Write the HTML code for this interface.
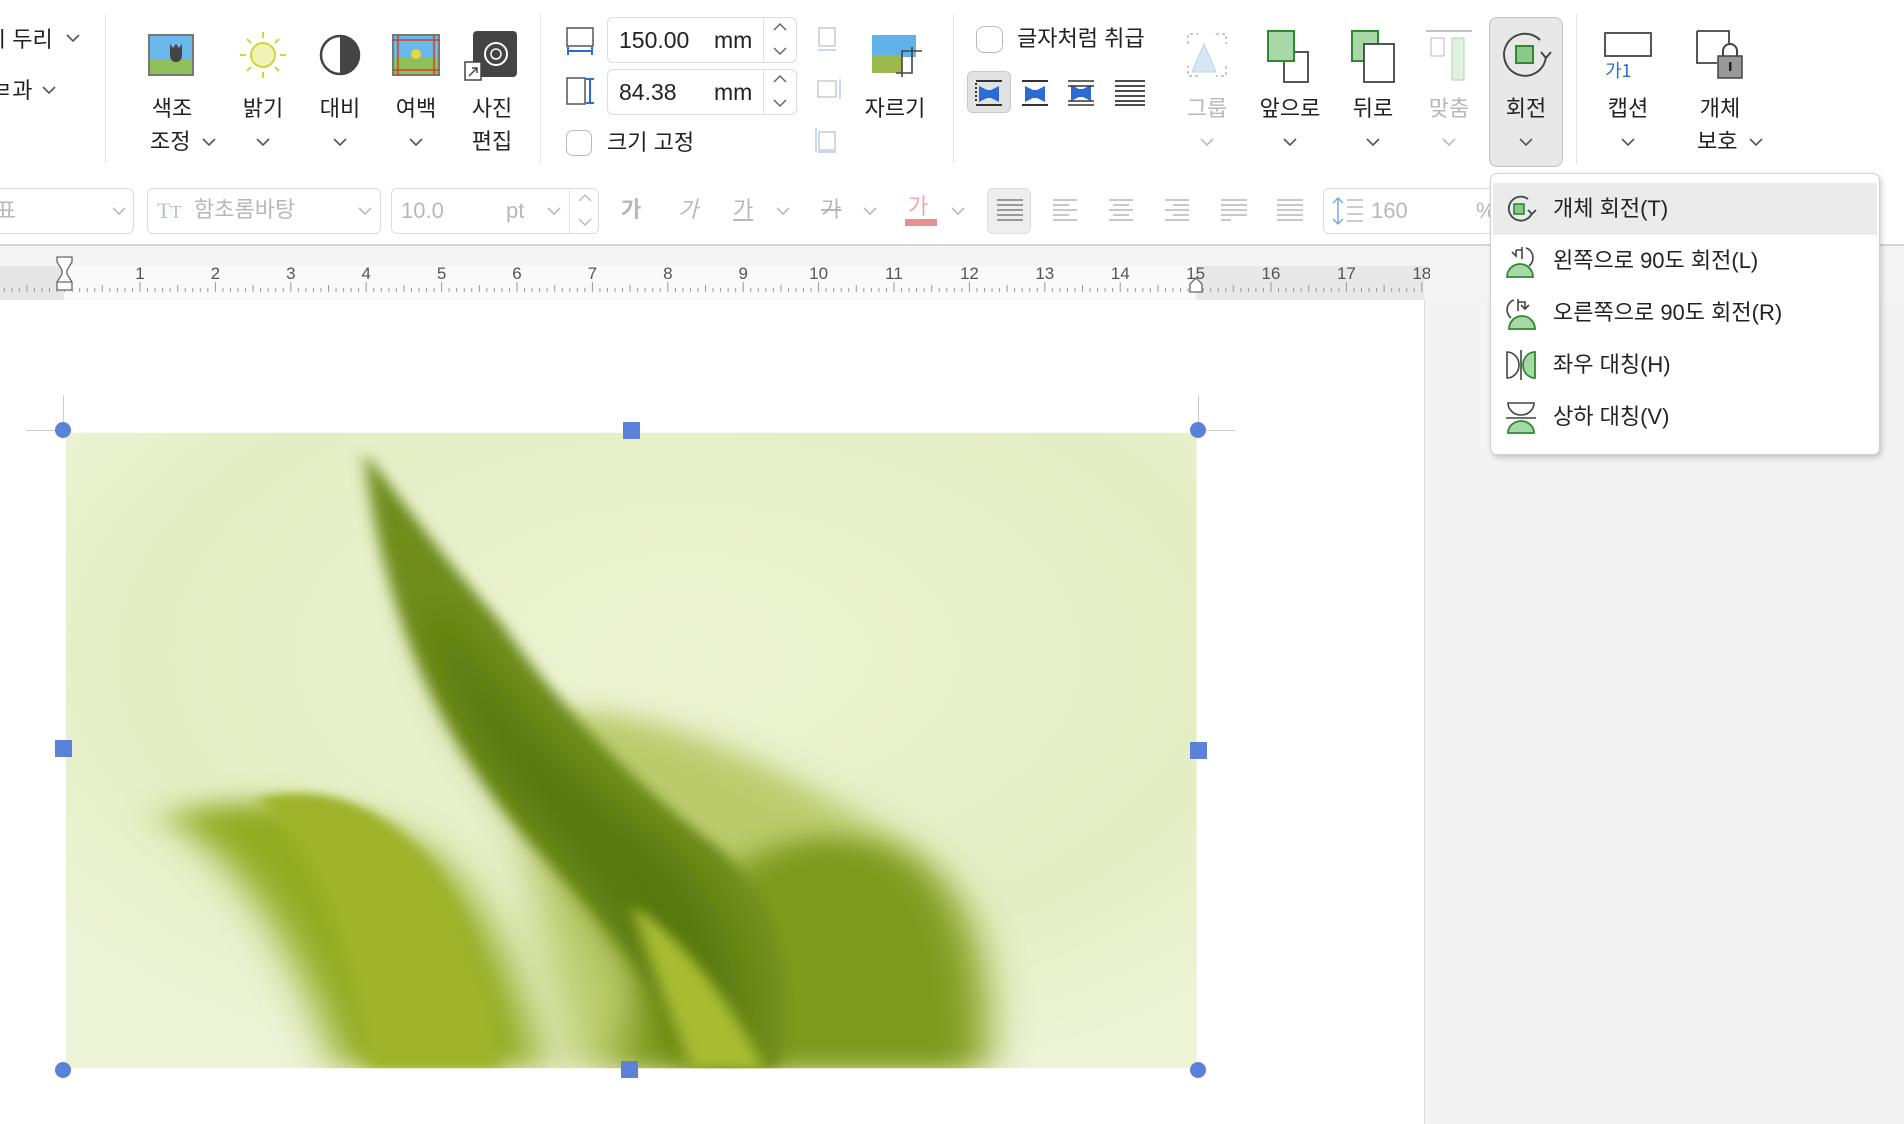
<!DOCTYPE html>
<html><head><meta charset="utf-8"><style>
*{margin:0;padding:0;box-sizing:border-box}
body{width:1904px;height:1124px;overflow:hidden;background:#fff;font-family:"Liberation Sans","Noto Sans CJK KR",sans-serif;color:#222;position:relative}
.a{position:absolute}
.c{position:absolute;transform:translateX(-50%);white-space:nowrap;font-size:22px;line-height:1}
.t{position:absolute;white-space:nowrap;font-size:22px;line-height:1}
.g{color:#b8b8b8}
.box{position:absolute;border:1px solid #dcdcdc;border-radius:6px;background:#fff}
.sep{position:absolute;width:1px;background:#e4e4e4;top:14px;height:150px}
</style></head><body>
<div class="t" style="left:-8px;top:29px">ㅣ두리</div>
<svg class="a" style="left:66px;top:34px" width="14" height="9"><polyline points="1,1 7,7 13,1" fill="none" stroke="#555" stroke-width="1.6"/></svg>
<div class="t" style="left:-8px;top:80px">ㄹ과</div>
<svg class="a" style="left:42px;top:86px" width="14" height="9"><polyline points="1,1 7,7 13,1" fill="none" stroke="#555" stroke-width="1.6"/></svg>
<div class="sep" style="left:105px"></div>

<svg class="a" style="left:148px;top:34px" width="46" height="42"><rect x="1" y="1" width="44" height="40" fill="#6bb8ea" stroke="#777"/><rect x="1" y="26" width="44" height="15" fill="#8fbf5a"/><path d="M28 10 l3 4 3-4 v10 q0 8-6 8 q-6 0-6-8 v-10 l3 4z" fill="#444"/><rect x="1" y="1" width="44" height="40" fill="none" stroke="#777" stroke-width="2"/></svg>
<div class="c" style="left:172px;top:98px">색조</div>
<div class="t" style="left:150px;top:131px">조정</div>
<svg class="a" style="left:202px;top:138px" width="14" height="9"><polyline points="1,1 7,7 13,1" fill="none" stroke="#555" stroke-width="1.6"/></svg>
<svg class="a" style="left:238px;top:30px" width="50" height="50"><circle cx="25" cy="25" r="12" fill="#eef3b8" stroke="#cdd63a" stroke-width="2"/><g stroke="#cdd63a" stroke-width="2"><line x1="25" y1="2" x2="25" y2="8"/><line x1="25" y1="42" x2="25" y2="48"/><line x1="2" y1="25" x2="8" y2="25"/><line x1="42" y1="25" x2="48" y2="25"/><line x1="9" y1="9" x2="13" y2="13"/><line x1="37" y1="37" x2="41" y2="41"/><line x1="41" y1="9" x2="37" y2="13"/><line x1="9" y1="41" x2="13" y2="37"/></g></svg>
<div class="c" style="left:263px;top:98px">밝기</div>
<svg class="a" style="left:256px;top:138px" width="14" height="9"><polyline points="1,1 7,7 13,1" fill="none" stroke="#555" stroke-width="1.6"/></svg>
<svg class="a" style="left:318px;top:33px" width="44" height="44"><circle cx="22" cy="22" r="19" fill="#fff" stroke="#444" stroke-width="2.5"/><path d="M22 3 a19 19 0 0 1 0 38z" fill="#444"/></svg>
<div class="c" style="left:340px;top:98px">대비</div>
<svg class="a" style="left:333px;top:138px" width="14" height="9"><polyline points="1,1 7,7 13,1" fill="none" stroke="#555" stroke-width="1.6"/></svg>
<svg class="a" style="left:392px;top:34px" width="48" height="42"><rect x="1" y="1" width="46" height="40" fill="#6bb8ea" stroke="#777" stroke-width="2"/><rect x="2" y="24" width="44" height="16" fill="#8fbf5a"/><circle cx="24" cy="20" r="5" fill="#e8d83a"/><g stroke="#d04020" stroke-width="1.5"><line x1="6" y1="1" x2="6" y2="41"/><line x1="42" y1="1" x2="42" y2="41"/><line x1="1" y1="6" x2="47" y2="6"/><line x1="1" y1="36" x2="47" y2="36"/></g></svg>
<div class="c" style="left:416px;top:98px">여백</div>
<svg class="a" style="left:409px;top:138px" width="14" height="9"><polyline points="1,1 7,7 13,1" fill="none" stroke="#555" stroke-width="1.6"/></svg>
<svg class="a" style="left:463px;top:30px" width="56" height="52"><rect x="10" y="1" width="44" height="46" rx="4" fill="#444"/><circle cx="33" cy="24" r="11" fill="none" stroke="#fff" stroke-width="2"/><circle cx="33" cy="24" r="5" fill="none" stroke="#fff" stroke-width="1.5"/><rect x="2" y="32" width="16" height="18" fill="#fff" stroke="#444" stroke-width="1.5"/><path d="M6 46 l8-8 M9 38 h5 v5" stroke="#444" stroke-width="1.5" fill="none"/></svg>
<div class="c" style="left:492px;top:98px">사진</div>
<div class="c" style="left:492px;top:131px">편집</div>
<div class="sep" style="left:540px"></div>

<svg class="a" style="left:565px;top:26px" width="30" height="30"><rect x="2" y="2" width="26" height="18" fill="#fff" stroke="#555" stroke-width="1.5"/><path d="M2 25 h26 M3 21 v8 M27 21 v8" stroke="#2b6bd6" stroke-width="2"/></svg>
<svg class="a" style="left:565px;top:76px" width="30" height="30"><rect x="2" y="2" width="18" height="26" fill="#fff" stroke="#555" stroke-width="1.5"/><path d="M25 2 v26 M21 3 h8 M21 27 h8" stroke="#2b6bd6" stroke-width="2"/></svg>
<div class="box" style="left:607px;top:17px;width:190px;height:46px"></div>
<div class="a" style="left:763px;top:18px;width:1px;height:44px;background:#e0e0e0"></div>
<div class="t" style="left:619px;top:29px;font-size:23px">150.00</div>
<div class="t" style="left:714px;top:29px;font-size:23px">mm</div>
<svg class="a" style="left:771px;top:21px" width="18" height="38"><polyline points="3,9 9,3 15,9" fill="none" stroke="#666" stroke-width="1.5"/><polyline points="3,27 9,33 15,27" fill="none" stroke="#666" stroke-width="1.5"/></svg>
<div class="box" style="left:607px;top:69px;width:190px;height:46px"></div>
<div class="a" style="left:763px;top:70px;width:1px;height:44px;background:#e0e0e0"></div>
<div class="t" style="left:619px;top:81px;font-size:23px">84.38</div>
<div class="t" style="left:714px;top:81px;font-size:23px">mm</div>
<svg class="a" style="left:771px;top:73px" width="18" height="38"><polyline points="3,9 9,3 15,9" fill="none" stroke="#666" stroke-width="1.5"/><polyline points="3,27 9,33 15,27" fill="none" stroke="#666" stroke-width="1.5"/></svg>
<div class="a" style="left:566px;top:130px;width:26px;height:26px;border:1.5px solid #bbb;border-radius:7px"></div>
<div class="t" style="left:607px;top:132px">크기 고정</div>
<svg class="a" style="left:814px;top:24px" width="28" height="130" opacity=".5"><g fill="none" stroke="#999" stroke-width="1.5"><rect x="5" y="4" width="16" height="18"/><rect x="4" y="57" width="18" height="16"/><rect x="5" y="108" width="16" height="18"/></g><g stroke="#6b9be0" stroke-width="1.5"><path d="M4 26 h18"/><path d="M26 55 v20"/><path d="M2 104 v24 M4 128 h18"/></g></svg>
<svg class="a" style="left:870px;top:33px" width="52" height="48"><rect x="2" y="2" width="44" height="22" fill="#5fb2ea"/><rect x="2" y="22" width="30" height="18" fill="#9bb94c"/><path d="M42 14 v26 h-16 M32 44 v-26 h20" fill="none" stroke="#444" stroke-width="1.6"/></svg>
<div class="c" style="left:895px;top:98px">자르기</div>
<div class="sep" style="left:953px"></div>

<div class="a" style="left:976px;top:26px;width:27px;height:27px;border:1.5px solid #bbb;border-radius:8px"></div>
<div class="t" style="left:1017px;top:28px">글자처럼 취급</div>
<div class="a" style="left:967px;top:71px;width:44px;height:42px;background:#e2e2e2;border:1px solid #c8c8c8;border-radius:6px"></div>
<svg class="a" style="left:974px;top:78px" width="180" height="30"><g fill="#2b6bd6"><path d="M5 8 l8 4 v8 l-8 4z M25 8 l-8 4 v8 l8 4z M13 12 h4 v8 h-4z"/><path d="M51 8 l8 4 v8 l-8 4z M71 8 l-8 4 v8 l8 4z M59 12 h4 v8 h-4z"/><path d="M97 7 l8 4 v8 l-8 4z M117 7 l-8 4 v8 l8 4z M105 11 h4 v8 h-4z"/></g><g stroke="#333" stroke-width="2"><path d="M2 3 h26 M2 27 h26"/><path d="M2 5 v20" stroke-dasharray="2 2"/><path d="M48 3 h26 M48 27 h26"/><path d="M94 3 h26 M94 8 h26 M94 23 h26 M94 27 h26" stroke-width="1.5"/><path d="M141 3 h30 M141 8 h30 M141 13 h30 M141 18 h30 M141 23 h30 M141 27 h30" stroke-width="1.8"/></g></svg>

<svg class="a" style="left:1184px;top:30px" width="46" height="50" opacity=".45"><path d="M4 14 v-10 h10 M32 4 h10 v10 M42 36 v10 h-10 M14 46 h-10 v-10" fill="none" stroke="#888" stroke-width="2" stroke-dasharray="3 3"/><path d="M20 14 l-12 28 h24z" fill="#a8c8ea" stroke="#6a9ad6"/></svg>
<div class="c g" style="left:1207px;top:98px">그룹</div>
<svg class="a" style="left:1200px;top:138px" width="14" height="9"><polyline points="1,1 7,7 13,1" fill="none" stroke="#bbb" stroke-width="1.6"/></svg>
<svg class="a" style="left:1264px;top:28px" width="52" height="58"><rect x="20" y="24" width="24" height="30" fill="#fff" stroke="#444" stroke-width="1.8"/><rect x="4" y="3" width="26" height="30" fill="#a8d8a8" stroke="#2d8a2d" stroke-width="2"/></svg>
<div class="c" style="left:1290px;top:98px">앞으로</div>
<svg class="a" style="left:1283px;top:138px" width="14" height="9"><polyline points="1,1 7,7 13,1" fill="none" stroke="#555" stroke-width="1.6"/></svg>
<svg class="a" style="left:1348px;top:28px" width="52" height="58"><rect x="4" y="3" width="26" height="30" fill="#a8d8a8" stroke="#2d8a2d" stroke-width="2"/><rect x="16" y="16" width="30" height="38" fill="#fff" stroke="#444" stroke-width="1.8"/></svg>
<div class="c" style="left:1373px;top:98px">뒤로</div>
<svg class="a" style="left:1366px;top:138px" width="14" height="9"><polyline points="1,1 7,7 13,1" fill="none" stroke="#555" stroke-width="1.6"/></svg>
<svg class="a" style="left:1424px;top:28px" width="50" height="58" opacity=".4"><path d="M2 3 h46" stroke="#666" stroke-width="2"/><rect x="7" y="10" width="13" height="18" fill="#fff" stroke="#555"/><rect x="28" y="10" width="12" height="42" fill="#b8e0b8" stroke="#3a9a3a"/></svg>
<div class="c g" style="left:1449px;top:98px">맞춤</div>
<svg class="a" style="left:1442px;top:138px" width="14" height="9"><polyline points="1,1 7,7 13,1" fill="none" stroke="#bbb" stroke-width="1.6"/></svg>
<div class="a" style="left:1489px;top:17px;width:74px;height:150px;background:#e8e8e8;border:1.5px solid #c4c4c4;border-radius:8px"></div>
<svg class="a" style="left:1500px;top:30px" width="52" height="52"><path d="M40 10 A21 21 0 1 0 46 26" fill="none" stroke="#444" stroke-width="2"/><polyline points="41,22 46,28 51,22" fill="none" stroke="#444" stroke-width="2"/><rect x="16" y="16" width="17" height="17" fill="#8cc88c" stroke="#2d8a2d" stroke-width="2"/></svg>
<div class="c" style="left:1526px;top:98px">회전</div>
<svg class="a" style="left:1519px;top:138px" width="14" height="9"><polyline points="1,1 7,7 13,1" fill="none" stroke="#555" stroke-width="1.6"/></svg>
<div class="sep" style="left:1576px"></div>
<svg class="a" style="left:1602px;top:30px" width="50" height="50"><rect x="3" y="3" width="46" height="23" fill="#fff" stroke="#444" stroke-width="1.8"/><text x="3" y="47" font-size="18" fill="#2b6bd6" font-family="Noto Sans CJK KR,sans-serif">가1</text></svg>
<div class="c" style="left:1628px;top:98px">캡션</div>
<svg class="a" style="left:1621px;top:138px" width="14" height="9"><polyline points="1,1 7,7 13,1" fill="none" stroke="#555" stroke-width="1.6"/></svg>
<svg class="a" style="left:1694px;top:28px" width="54" height="56"><path d="M3 3 h32 v14 M3 3 v32 h20" fill="none" stroke="#444" stroke-width="1.8"/><path d="M29 28 v-5 a7 7 0 0 1 14 0 v5" fill="none" stroke="#444" stroke-width="2"/><rect x="24" y="28" width="24" height="22" fill="#999" stroke="#444" stroke-width="1.5"/><rect x="35" y="34" width="2.5" height="9" fill="#222"/></svg>
<div class="c" style="left:1720px;top:98px">개체</div>
<div class="t" style="left:1697px;top:131px">보호</div>
<svg class="a" style="left:1749px;top:138px" width="14" height="9"><polyline points="1,1 7,7 13,1" fill="none" stroke="#555" stroke-width="1.6"/></svg>

<div class="box" style="left:-10px;top:188px;width:144px;height:46px"></div>
<div class="t g" style="left:-4px;top:200px">표</div>
<svg class="a" style="left:112px;top:207px" width="14" height="9"><polyline points="1,1 7,7 13,1" fill="none" stroke="#bbb" stroke-width="1.6"/></svg>
<div class="box" style="left:147px;top:188px;width:234px;height:46px"></div>
<div class="t" style="left:157px;top:200px;font-size:22px;color:#a8d0a8;font-family:'Liberation Serif',serif">T<span style="font-size:18px;color:#bbb">T</span></div>
<div class="t g" style="left:194px;top:199px">함초롬바탕</div>
<svg class="a" style="left:358px;top:207px" width="14" height="9"><polyline points="1,1 7,7 13,1" fill="none" stroke="#bbb" stroke-width="1.6"/></svg>
<div class="box" style="left:391px;top:188px;width:208px;height:46px"></div>
<div class="a" style="left:569px;top:189px;width:1px;height:44px;background:#e4e4e4"></div>
<div class="t g" style="left:401px;top:200px">10.0</div>
<div class="t g" style="left:506px;top:200px">pt</div>
<svg class="a" style="left:547px;top:207px" width="14" height="9"><polyline points="1,1 7,7 13,1" fill="none" stroke="#bbb" stroke-width="1.6"/></svg>
<svg class="a" style="left:576px;top:192px" width="18" height="38"><polyline points="3,9 9,3 15,9" fill="none" stroke="#bbb" stroke-width="1.5"/><polyline points="3,27 9,33 15,27" fill="none" stroke="#bbb" stroke-width="1.5"/></svg>
<div class="t g" style="left:621px;top:199px;font-weight:bold">가</div>
<div class="t g" style="left:678px;top:199px;font-style:italic">가</div>
<div class="t g" style="left:733px;top:199px;text-decoration:underline">가</div>
<svg class="a" style="left:776px;top:207px" width="14" height="9"><polyline points="1,1 7,7 13,1" fill="none" stroke="#bbb" stroke-width="1.6"/></svg>
<div class="t g" style="left:821px;top:199px;text-decoration:line-through">가</div>
<svg class="a" style="left:863px;top:207px" width="14" height="9"><polyline points="1,1 7,7 13,1" fill="none" stroke="#bbb" stroke-width="1.6"/></svg>
<div class="t" style="left:908px;top:196px;color:#f0a8a8">가</div>
<div class="a" style="left:905px;top:219px;width:32px;height:7px;background:#e89090"></div>
<svg class="a" style="left:951px;top:207px" width="14" height="9"><polyline points="1,1 7,7 13,1" fill="none" stroke="#bbb" stroke-width="1.6"/></svg>
<div class="a" style="left:987px;top:188px;width:44px;height:46px;background:#eee;border:1px solid #ddd;border-radius:6px"></div>
<svg class="a" style="left:995px;top:197px" width="310" height="28"><g stroke="#999" stroke-width="2"><path d="M2 3h26M2 8h26M2 13h26M2 18h26M2 23h26"/><path d="M58 3h24M58 8h16M58 13h24M58 18h16M58 23h24" stroke="#c8c8c8"/><path d="M114 3h24M118 8h16M114 13h24M118 18h16M114 23h24" stroke="#c8c8c8"/><path d="M170 3h24M178 8h16M170 13h24M178 18h16M170 23h24" stroke="#c8c8c8"/><path d="M226 3h26M226 8h26M226 13h26M226 18h26M226 23h10" stroke="#c8c8c8"/><path d="M282 3h26M282 8h26M282 13h26M282 18h26M282 23h26" stroke="#c8c8c8"/></g></svg>
<div class="box" style="left:1323px;top:188px;width:180px;height:46px"></div>
<svg class="a" style="left:1330px;top:195px" width="36" height="32"><path d="M8 3 v26 M3 8 l5-5 5 5 M3 24 l5 5 5-5" fill="none" stroke="#7aa8e0" stroke-width="1.5"/><path d="M17 5h16M17 12h16M17 19h16M17 26h16" stroke="#bbb" stroke-width="1.5"/></svg>
<div class="t g" style="left:1371px;top:200px">160</div>
<div class="t g" style="left:1476px;top:200px">%</div>

<div class="a" style="left:0;top:244px;width:1904px;height:2px;background:#d4d4d4"></div>
<div class="a" style="left:0;top:246px;width:1904px;height:54px;background:#f4f4f4"></div>
<div class="a" style="left:0;top:266px;width:64px;height:34px;background:#e6e6e6"></div>
<div class="a" style="left:64px;top:266px;width:1132px;height:34px;background:#fafafa"></div>
<div class="a" style="left:1196px;top:266px;width:228px;height:34px;background:#e8e8e8"></div>
<svg class="a" style="left:0;top:246px" width="1430" height="54"><g stroke="#999" stroke-width="1" id="tk"></g><g font-size="17" fill="#555" text-anchor="middle" font-family="Liberation Sans,sans-serif" id="nm"></g>
<path d="M57 11 h15 v5 l-5 8 v4 l5 8 v8 h-15 v-8 l5-8 v-4 l-5-8z M57 36 h15" fill="#fff" stroke="#666" stroke-width="1.3"/>
<path d="M1190 46 v-8 l6-6 6 6 v8z" fill="#fff" stroke="#666" stroke-width="1.3"/></svg>
<script>
(function(){var tk=document.getElementById('tk'),nm=document.getElementById('nm'),s='',n='';
for(var i=-8;i<=18*10;i++){var x=64.6+i*7.54;if(x<0||x>1424)continue;var h=(i%10==0)?10:(i%5==0?7:4);s+='<line x1="'+x+'" y1="'+(46-h)+'" x2="'+x+'" y2="46"/>';}
for(var k=1;k<=18;k++){n+='<text x="'+(64.6+k*75.4)+'" y="33">'+k+'</text>';}
tk.innerHTML=s;nm.innerHTML=n;})();
</script>
<div class="a" style="left:1424px;top:300px;width:480px;height:824px;background:#f3f3f3;border-left:1px solid #ddd"></div>

<svg class="a" style="left:60px;top:420px" width="1150" height="660" viewBox="0 0 1568 1568" preserveAspectRatio="none">
<defs><filter id="b" x="-20%" y="-20%" width="140%" height="140%"><feGaussianBlur stdDeviation="30"/></filter>
<filter id="b2" x="-20%" y="-20%" width="140%" height="140%"><feGaussianBlur stdDeviation="10"/></filter>
<clipPath id="cl"><rect x="8" y="30" width="1542" height="1510"/></clipPath>
<radialGradient id="bg" cx="0.55" cy="0.35" r="0.7"><stop offset="0" stop-color="#edf3d2"/><stop offset="0.7" stop-color="#e4eec4"/><stop offset="1" stop-color="#edf3d6"/></radialGradient></defs>
<g clip-path="url(#cl)">
<rect x="8" y="30" width="1542" height="1510" fill="url(#bg)"/>
<path d="M650 700 C800 650 1000 850 1150 1000 C1250 1150 1280 1350 1260 1540 L700 1540 C660 1200 600 850 650 700Z" fill="#b0c254" filter="url(#b)" opacity=".8"/>
<path d="M1000 1000 C1200 950 1260 1200 1250 1540 L760 1540 C800 1300 850 1080 1000 1000Z" fill="#7e9a1c" filter="url(#b)"/>
<path d="M140 940 C250 880 420 900 520 1050 C600 1200 640 1400 660 1540 L380 1540 C330 1300 260 1050 140 940Z" fill="#93ab24" filter="url(#b)"/>
<path d="M270 900 C380 850 480 950 540 1150 C580 1300 600 1450 600 1540 L420 1540 C400 1300 360 1050 270 900Z" fill="#9fb42a" filter="url(#b2)"/>
<path d="M415 75 C470 200 520 320 600 480 C680 680 780 860 900 1020 C980 1150 1000 1350 980 1540 L880 1540 C820 1350 720 1150 640 1000 C540 800 440 500 415 75Z" fill="#6f8d1c" filter="url(#b2)"/>
<path d="M500 400 C570 600 700 850 820 1000 C900 1120 940 1300 930 1540 L860 1540 C800 1320 720 1100 620 900 C560 760 510 600 500 400Z" fill="#58780c" filter="url(#b)"/>
<path d="M780 1150 C860 1250 920 1400 960 1540 L860 1540 C830 1400 800 1280 780 1150Z" fill="#a8bc30" filter="url(#b2)"/>
</g></svg>
<div class="a" style="left:63px;top:395px;width:1px;height:36px;background:#ccc"></div>
<div class="a" style="left:1198px;top:395px;width:1px;height:36px;background:#ccc"></div>
<div class="a" style="left:26px;top:430px;width:37px;height:1px;background:#ccc"></div>
<div class="a" style="left:1198px;top:430px;width:37px;height:1px;background:#ccc"></div>
<div class="a" style="left:55px;top:422px;width:16px;height:16px;border-radius:50%;background:#5b82d8"></div>
<div class="a" style="left:1190px;top:422px;width:16px;height:16px;border-radius:50%;background:#5b82d8"></div>
<div class="a" style="left:55px;top:1062px;width:16px;height:16px;border-radius:50%;background:#5b82d8"></div>
<div class="a" style="left:1190px;top:1062px;width:16px;height:16px;border-radius:50%;background:#5b82d8"></div>
<div class="a" style="left:623px;top:422px;width:17px;height:17px;background:#5b82d8"></div>
<div class="a" style="left:621px;top:1061px;width:17px;height:17px;background:#5b82d8"></div>
<div class="a" style="left:55px;top:740px;width:17px;height:17px;background:#5b82d8"></div>
<div class="a" style="left:1190px;top:742px;width:17px;height:17px;background:#5b82d8"></div>

<div class="a" style="left:1490px;top:173px;width:390px;height:282px;background:#fff;border:1px solid #d0d0d0;border-radius:7px;box-shadow:2px 3px 6px rgba(0,0,0,.18)"></div>
<div class="a" style="left:1493px;top:183px;width:384px;height:52px;background:#ebebeb"></div>
<svg class="a" style="left:1504px;top:193px" width="34" height="34"><path d="M24 6 A12 12 0 1 0 28 20" fill="none" stroke="#444" stroke-width="1.8"/><polyline points="24,17 28,21 32,17" fill="none" stroke="#444" stroke-width="1.8"/><rect x="10" y="11" width="10" height="10" fill="#8cc88c" stroke="#2d8a2d" stroke-width="1.6"/></svg>
<div class="t" style="left:1553px;top:198px">개체 회전(T)</div>
<svg class="a" style="left:1504px;top:244px" width="34" height="34"><path d="M3 33 a13 13 0 0 1 26 0z" fill="#a8d8a8" stroke="#2d8a2d" stroke-width="1.8"/><path d="M22 4 a9 10 0 0 1 3 18" fill="none" stroke="#444" stroke-width="1.6"/><path d="M18 3 v12 M12 6 v6 l-4-4 M12 6 h6" fill="none" stroke="#444" stroke-width="1.6"/></svg>
<div class="t" style="left:1553px;top:250px">왼쪽으로 90도 회전(L)</div>
<svg class="a" style="left:1504px;top:296px" width="34" height="34"><path d="M5 33 a13 13 0 0 1 26 0z" fill="#a8d8a8" stroke="#2d8a2d" stroke-width="1.8"/><path d="M10 4 a9 10 0 0 0 -3 18" fill="none" stroke="#444" stroke-width="1.6"/><path d="M14 3 v12 M14 6 h7 v6 M17 9 l4 4 4-4" fill="none" stroke="#444" stroke-width="1.6"/></svg>
<div class="t" style="left:1553px;top:302px">오른쪽으로 90도 회전(R)</div>
<svg class="a" style="left:1504px;top:348px" width="34" height="34"><path d="M3 4 a12 13 0 0 1 0 26z" fill="#fff" stroke="#444" stroke-width="1.6"/><path d="M17 2 v30" stroke="#444" stroke-width="1.6"/><path d="M31 4 a12 13 0 0 0 0 26z" fill="#a8d8a8" stroke="#2d8a2d" stroke-width="1.8"/></svg>
<div class="t" style="left:1553px;top:354px">좌우 대칭(H)</div>
<svg class="a" style="left:1504px;top:400px" width="34" height="34"><path d="M4 3 h26 a13 12 0 0 1 -26 0z" fill="#fff" stroke="#444" stroke-width="1.6"/><path d="M2 18 h30" stroke="#444" stroke-width="1.6"/><path d="M4 33 a13 12 0 0 1 26 0z" fill="#a8d8a8" stroke="#2d8a2d" stroke-width="1.8"/></svg>
<div class="t" style="left:1553px;top:406px">상하 대칭(V)</div>
</body></html>
